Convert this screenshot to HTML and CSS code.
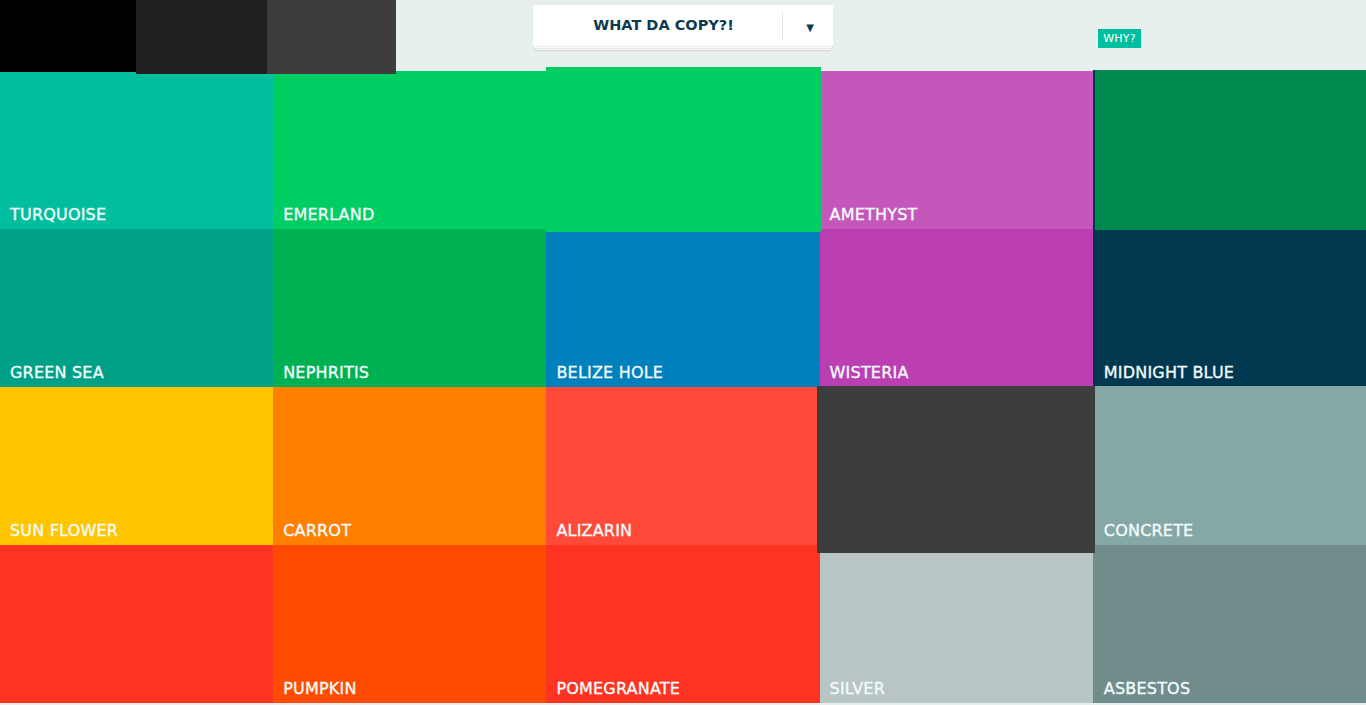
FILE: index.html
```html
<!DOCTYPE html>
<html>
<head>
<meta charset="utf-8">
<title>Flat colors</title>
<link rel="stylesheet" href="styles.css">
</head>
<body>
<header class="top">
  <div class="swatch sw-black"></div>
  <div class="swatch sw-dark"></div>
  <div class="swatch sw-gray"></div>
  <div class="copy-btn">
    <span class="copy-label">WHAT DA COPY?!</span>
    <span class="copy-arrow">&#9660;</span>
  </div>
  <span class="why">WHY?</span>
</header>
<main class="grid">
  <div class="tile turquoise"><span class="name">TURQUOISE</span></div>
  <div class="tile emerland"><span class="name">EMERLAND</span></div>
  <div class="tile lifted-green"></div>
  <div class="tile amethyst"><span class="name">AMETHYST</span></div>
  <div class="tile deep-green"></div>

  <div class="tile green-sea"><span class="name">GREEN SEA</span></div>
  <div class="tile nephritis"><span class="name">NEPHRITIS</span></div>
  <div class="tile belize"><span class="name">BELIZE HOLE</span></div>
  <div class="tile wisteria"><span class="name">WISTERIA</span></div>
  <div class="tile midnight"><span class="name">MIDNIGHT BLUE</span></div>

  <div class="tile sunflower"><span class="name">SUN FLOWER</span></div>
  <div class="tile carrot"><span class="name">CARROT</span></div>
  <div class="tile alizarin"><span class="name">ALIZARIN</span></div>
  <div class="tile lifted-dark"></div>
  <div class="tile concrete"><span class="name">CONCRETE</span></div>

  <div class="tile red-cell"></div>
  <div class="tile pumpkin"><span class="name">PUMPKIN</span></div>
  <div class="tile pomegranate"><span class="name">POMEGRANATE</span></div>
  <div class="tile silver"><span class="name">SILVER</span></div>
  <div class="tile asbestos"><span class="name">ASBESTOS</span></div>
</main>
</body>
</html>
```
FILE: styles.css
```css
html, body {
  margin: 0;
  padding: 0;
}
body {
  background: #e8f0ef;
  font-family: "DejaVu Sans", "Liberation Sans", sans-serif;
  overflow: hidden;
}
.top {
  display: flex;
  align-items: flex-start;
  height: 72px;
  position: relative;
  z-index: 3;
}
.swatch {
  flex: none;
}
.sw-black {
  width: 136px;
  height: 72px;
  background: #000000;
}
.sw-dark {
  width: 131px;
  height: 74px;
  background: #202020;
}
.sw-gray {
  width: 129px;
  height: 74px;
  background: #3d3d3d;
}
.copy-btn {
  flex: none;
  margin-left: 137px;
  margin-top: 5px;
  width: 300px;
  height: 41px;
  background: #ffffff;
  display: flex;
  align-items: center;
  box-shadow:
    0 1px 1px rgba(0, 0, 0, 0.08),
    0 3px 0 -1px #ffffff,
    0 4px 1px -1px rgba(0, 0, 0, 0.1),
    0 6px 0 -2px #ffffff,
    0 7px 1px -2px rgba(0, 0, 0, 0.1);
}
.copy-label {
  width: 250px;
  box-sizing: border-box;
  text-align: center;
  padding-left: 12px;
  font-weight: bold;
  font-size: 14.5px;
  color: #0d3a4f;
  border-right: 1px solid #e3e9e9;
  line-height: 29px;
}
.copy-arrow {
  flex: 1;
  text-align: center;
  font-size: 10px;
  color: #0d3a4f;
  padding-top: 3px;
  padding-left: 4px;
}
.why {
  flex: none;
  margin-left: 265px;
  margin-top: 29px;
  width: 43px;
  height: 19px;
  background: #00bf9f;
  color: #ffffff;
  font-size: 11px;
  line-height: 19px;
  text-align: center;
  letter-spacing: 0.2px;
}
.grid {
  display: grid;
  grid-template-columns: repeat(5, 1fr);
  grid-template-rows: 157px 158px 158px 158px;
}
.tile {
  display: flex;
  align-items: flex-end;
  padding: 0 8px 6px 10px;
  min-width: 0;
}
.name {
  color: #f2fbfb;
  font-size: 16px;
  line-height: 16px;
  letter-spacing: 0.2px;
  white-space: nowrap;
  -webkit-text-stroke: 0.35px #f2fbfb;
}
.turquoise { background: #00be9e; }
.emerland { background: #00cd62; margin-top: -1px; }
.lifted-green {
  background: #00cd62;
  margin: -5px -1px -3px 0;
  position: relative;
  z-index: 2;
}
.amethyst { background: #c557bb; margin-top: -1px; }
.deep-green {
  background: #008a4e;
  border-left: 2px solid #00384f;
  margin: -2px 0 -1px 0;
  position: relative;
  z-index: 1;
}
.green-sea { background: #00a086; }
.nephritis { background: #00b153; }
.belize { background: #0080bd; }
.wisteria { background: #bb3fb2; }
.midnight { background: #00384f; }
.sunflower { background: #ffc600; }
.carrot { background: #ff8000; }
.alizarin { background: #ff4a3a; }
.lifted-dark {
  background: #3d3d3d;
  margin: -1px -2px -8px -3px;
  position: relative;
  z-index: 2;
}
.concrete { background: #85a8a6; margin-top: -1px; }
.red-cell { background: #ff3322; margin-bottom: -2px; }
.pumpkin { background: #ff4b00; }
.pomegranate { background: #ff3322; }
.silver { background: #b9c4c5; }
.asbestos { background: #708d8c; }
.midnight .name,
.concrete .name,
.asbestos .name { margin-left: 1px; }
```
